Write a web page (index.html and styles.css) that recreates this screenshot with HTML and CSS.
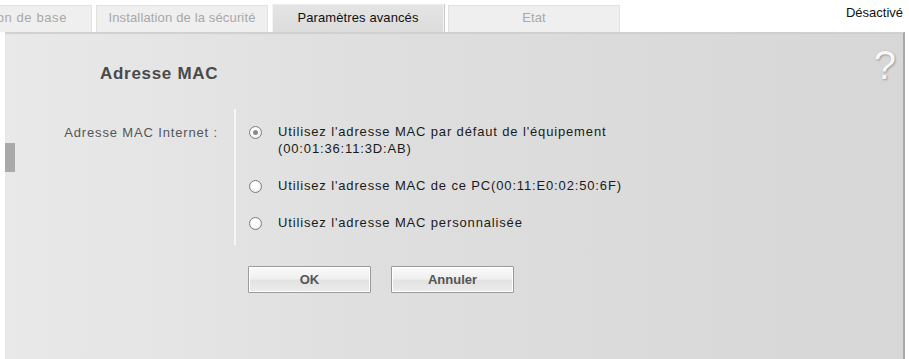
FILE: index.html
```html
<!DOCTYPE html>
<html lang="fr">
<head>
<meta charset="utf-8">
<title>Adresse MAC</title>
<link rel="stylesheet" href="styles.css">
</head>
<body>
<div class="page">
  <div class="top">
    <div class="tabs">
      <div class="tab tab-first">Configuration de base</div>
      <div class="tab">Installation de la sécurité</div>
      <div class="tab tab-active">Paramètres avancés</div>
      <div class="tab">Etat</div>
    </div>
    <div class="status">Désactivé</div>
  </div>
  <div class="panel">
    <div class="marker"></div>
    <div class="head">
      <h1 class="title">Adresse MAC</h1>
      <span class="help">?</span>
    </div>
    <div class="form">
      <div class="label">Adresse MAC Internet :</div>
      <div class="options">
        <label class="opt"><span class="radio checked"></span><span class="opt-text">Utilisez l'adresse MAC par défaut de l'équipement<br>(00:01:36:11:3D:AB)</span></label>
        <label class="opt"><span class="radio"></span><span class="opt-text">Utilisez l'adresse MAC de ce PC(00:11:E0:02:50:6F)</span></label>
        <label class="opt"><span class="radio"></span><span class="opt-text">Utilisez l'adresse MAC personnalisée</span></label>
      </div>
    </div>
    <div class="buttons">
      <button class="btn">OK</button>
      <button class="btn">Annuler</button>
    </div>
  </div>
</div>
</body>
</html>
```

FILE: styles.css
```css
html, body {
  margin: 0;
  padding: 0;
  background: #ffffff;
}
body {
  font-family: "Liberation Sans", Arial, sans-serif;
  width: 909px;
  height: 359px;
  overflow: hidden;
}
.page {
  display: flex;
  flex-direction: column;
  height: 359px;
}
.top {
  display: flex;
  justify-content: space-between;
  align-items: flex-start;
  height: 32px;
}
.tabs {
  display: flex;
  align-items: flex-end;
  height: 32px;
  margin-left: -80px;
  gap: 4px;
}
.tab {
  box-sizing: border-box;
  width: 172px;
  height: 27px;
  background: #efefef;
  border: 1px solid #e2e2e2;
  border-bottom: none;
  color: #a8a8a8;
  font-size: 13px;
  letter-spacing: 0.15px;
  text-align: center;
  line-height: 24px;
  white-space: nowrap;
}
.tab-first {
  text-align: right;
  padding-right: 24px;
  letter-spacing: 0.6px;
}
.tab-active {
  height: 28px;
  background: linear-gradient(#e4e4e4, #dcdcdc);
  border-color: #f4f4f4;
  border-top: 1px solid #ececec;
  color: #111;
  letter-spacing: 0.1px;
  line-height: 26px;
  box-shadow: 1px 0 0 #c8c8c8;
}
.status {
  font-size: 13px;
  color: #111;
  padding: 5px 6px 0 0;
}
.panel {
  position: relative;
  flex: 1;
  margin: 0 4px 0 5px;
  background: linear-gradient(90deg, #e9e9e9 0%, #dedede 45%, #d7d7d7 100%);
  border-right: 2px solid #a8a8a8;
  border-top: 1px solid #d0d0d0;
  box-shadow: inset 0 1px 1px #cfcfcf;
}
.marker {
  position: absolute;
  left: 0;
  top: 110px;
  width: 10px;
  height: 29px;
  background: #a9a9a9;
}
.head {
  display: flex;
  justify-content: space-between;
  align-items: flex-start;
  padding: 30px 7px 0 95px;
}
.title {
  margin: 1px 0 0 0;
  font-size: 17px;
  font-weight: bold;
  letter-spacing: 0.7px;
  color: #4a4a4a;
  line-height: 20px;
}
.help {
  font-size: 40px;
  line-height: 36px;
  color: #f8f8f8;
  text-shadow: 1px 1px 2px #9a9a9a, 0 0 1px #b0b0b0;
  margin-top: -16px;
}
.form {
  display: flex;
  margin-top: 25px;
}
.label {
  box-sizing: border-box;
  width: 231px;
  padding: 15px 16px 0 0;
  text-align: right;
  font-size: 13px;
  letter-spacing: 0.85px;
  color: #555;
  line-height: 17px;
  border-right: 2px solid #f6f6f6;
}
.options {
  display: flex;
  flex-direction: column;
  gap: 20px;
  padding: 14px 0 14px 13px;
}
.opt {
  display: flex;
  align-items: flex-start;
  gap: 16px;
  font-size: 13px;
  letter-spacing: 0.85px;
  color: #1a1a1a;
  line-height: 17px;
}
.radio {
  box-sizing: border-box;
  flex: none;
  width: 13px;
  height: 13px;
  margin-top: 3px;
  border-radius: 50%;
  border: 1px solid #7d7d7d;
  background: radial-gradient(circle at 45% 40%, #ffffff 30%, #e4e4e4 100%);
  display: flex;
  align-items: center;
  justify-content: center;
}
.radio.checked::after {
  content: "";
  width: 5px;
  height: 5px;
  border-radius: 50%;
  background: #8a8a8a;
}
.buttons {
  display: flex;
  gap: 20px;
  padding: 21px 0 0 243px;
}
.btn {
  box-sizing: border-box;
  width: 123px;
  height: 27px;
  border: 1px solid #9a9a9a;
  border-radius: 1px;
  background: linear-gradient(#fafafa 0%, #f0f0f0 45%, #e2e2e2 55%, #ececec 100%);
  font-family: "Liberation Sans", Arial, sans-serif;
  font-size: 13px;
  font-weight: bold;
  color: #555;
  padding: 0;
  box-shadow: inset 0 0 0 1px #ffffff;
}
```
